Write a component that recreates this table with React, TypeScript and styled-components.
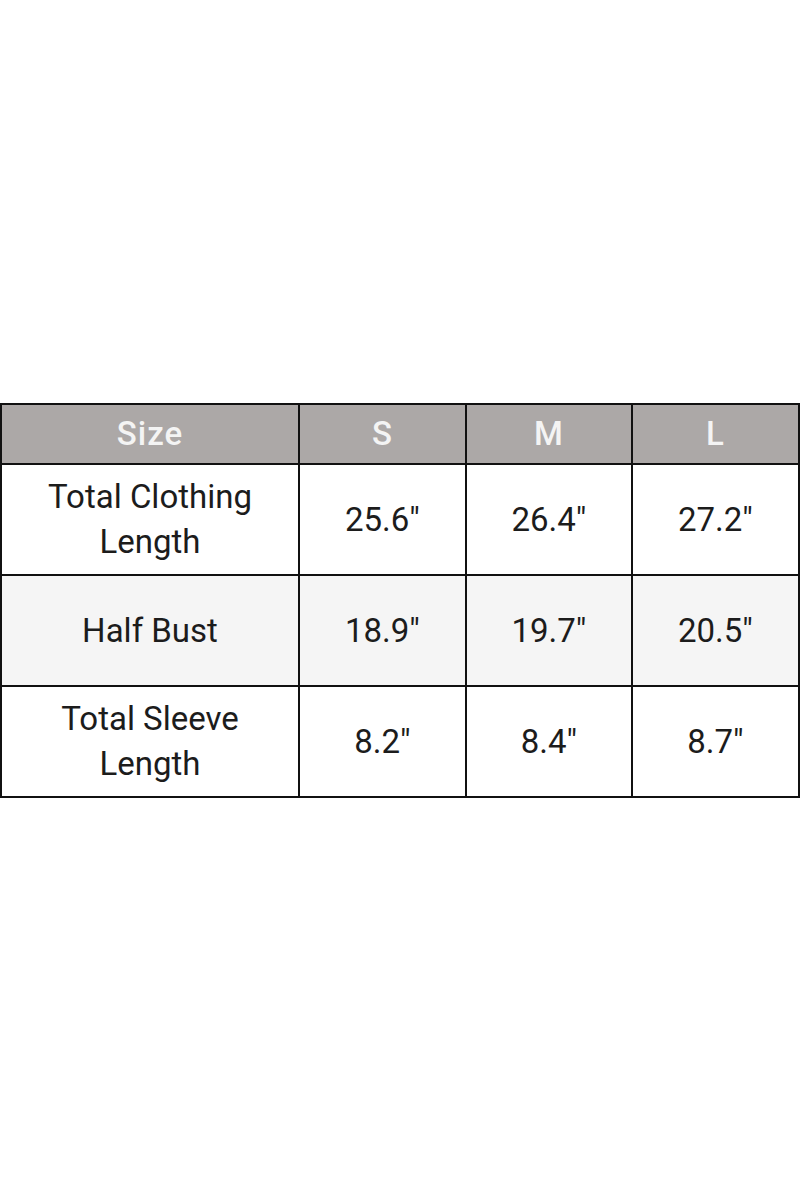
import React from "react";
import styled, { createGlobalStyle } from "styled-components";

const Global = createGlobalStyle`
  html, body { margin: 0; padding: 0; background: #fff; }
  body { font-family: Roboto, "Liberation Sans", sans-serif; }
`;

const Page = styled.div`
  min-height: 1200px;
  display: flex;
  align-items: center;
  justify-content: center;
`;

const Table = styled.div`
  width: 800px;
  box-sizing: border-box;
  display: grid;
  grid-template-columns: 296px 165px 164px 165px;
  grid-template-rows: 58px 109px 109px 109px;
  gap: 2px;
  padding: 2px;
  background: #111;
`;

const Cell = styled.div<{ $head?: boolean; $alt?: boolean }>`
  display: flex;
  align-items: center;
  justify-content: center;
  text-align: center;
  background: ${(p) => (p.$head ? "#aca8a7" : p.$alt ? "#f5f5f5" : "#ffffff")};
  color: ${(p) => (p.$head ? "#f4f4f4" : "#1c1c1c")};
  font-weight: ${(p) => (p.$head ? 500 : 400)};
  letter-spacing: ${(p) => (p.$head ? "1px" : "0")};
  font-size: 33px;
  line-height: 45px;
`;

const header = ["Size", "S", "M", "L"];
const rows = [
  ["Total Clothing\nLength", "25.6\"", "26.4\"", "27.2\""],
  ["Half Bust", "18.9\"", "19.7\"", "20.5\""],
  ["Total Sleeve\nLength", "8.2\"", "8.4\"", "8.7\""],
];

export default function App() {
  return (
    <>
      <Global />
      <Page>
        <Table>
          {header.map((h) => (
            <Cell key={h} $head>
              {h}
            </Cell>
          ))}
          {rows.map((r, i) =>
            r.map((c, j) => (
              <Cell key={`${i}-${j}`} $alt={i === 1}>
                <span>
                  {c.split("\n").map((line, k) => (
                    <React.Fragment key={k}>
                      {k > 0 && <br />}
                      {line}
                    </React.Fragment>
                  ))}
                </span>
              </Cell>
            ))
          )}
        </Table>
      </Page>
    </>
  );
}
